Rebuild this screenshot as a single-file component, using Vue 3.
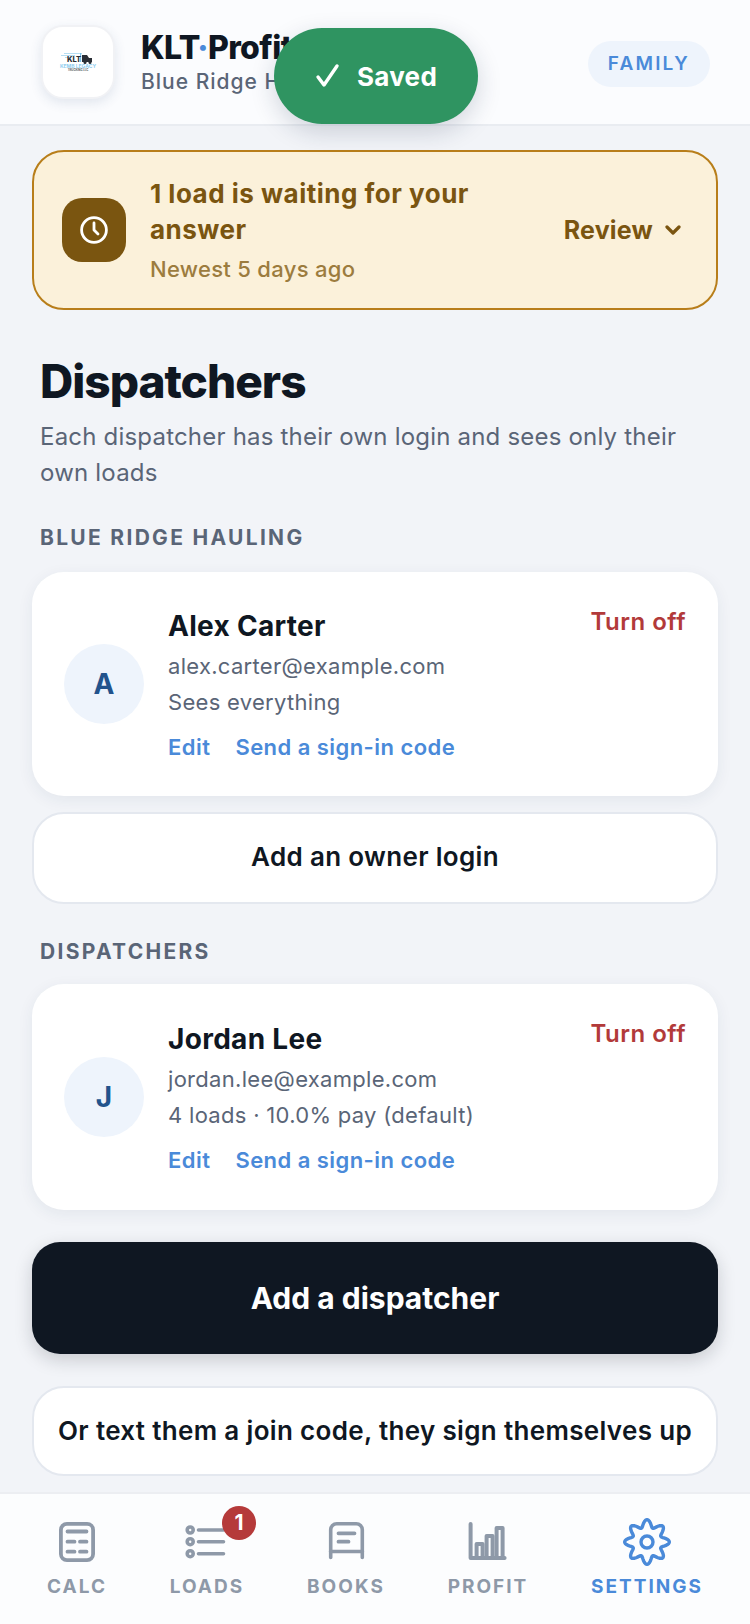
<script setup>
const owners = [
  { id: 1, initial: "A", name: "Alex Carter", email: "alex.carter@example.com", note: "Sees everything" },
];
const dispatchers = [
  { id: 2, initial: "J", name: "Jordan Lee", email: "jordan.lee@example.com", note: "4 loads · 10.0% pay (default)" },
];

// wavy outline for the settings cog, eight rounded teeth
const cogPath = Array.from({ length: 160 }, (_, i) => {
  const a = (i / 160) * Math.PI * 2;
  const r = 18.6 + 3.7 * Math.cos(8 * a);
  const x = 24 + r * Math.sin(a);
  const y = 24 - r * Math.cos(a);
  return `${i ? "L" : "M"}${x.toFixed(2)} ${y.toFixed(2)}`;
}).join("") + "Z";
</script>
<template>
  <div class="page">
    <header class="top">
      <div class="logo">
        <svg width="42" height="20" viewBox="0 0 42 20">
          <path d="M7 1h18v.8H7zM4 3h14v.8H4zM8 5h6v.8H8z" fill="#9fd3ee" />
          <rect x="23" y="1" width="1.200" height="9" fill="#7cc0e6" />
          <text x="10" y="10" class="logo-klt">KLT</text>
          <path d="M25 3h5l2 3h3v4H25z" fill="#2a2e35" />
          <circle cx="28" cy="10.500" r="1.500" fill="#2a2e35" />
          <circle cx="33" cy="10.500" r="1.500" fill="#2a2e35" />
          <text x="21" y="15.500" text-anchor="middle" class="logo-name">KEMB LEGACY</text>
          <text x="21" y="19" text-anchor="middle" class="logo-llc">TRUCKING LLC</text>
        </svg>
      </div>
      <div class="brand">
        <div class="brand-name">KLT<span class="dot">·</span>Profit</div>
        <div class="brand-sub">Blue Ridge Hauling</div>
      </div>
      <span class="plan">FAMILY</span>
    </header>

    <div class="toast">
      <svg width="26" height="26" viewBox="0 0 26 26" fill="none" stroke="#fff" stroke-width="3.400" stroke-linecap="round" stroke-linejoin="round">
        <path d="M3 14l6 8L22 3" />
      </svg>
      <span>Saved</span>
    </div>

    <main class="content">
      <section class="alert">
        <div class="alert-icon">
          <svg width="30" height="30" viewBox="0 0 30 30" fill="none" stroke="#fff" stroke-width="2.800" stroke-linecap="round" stroke-linejoin="round">
            <circle cx="15" cy="15" r="12.400" />
            <path d="M15 8v7l4 4" />
          </svg>
        </div>
        <div class="alert-text">
          <div class="alert-title">1 load is waiting for your answer</div>
          <div class="alert-sub">Newest 5 days ago</div>
        </div>
        <div class="review">
          <span>Review</span>
          <svg width="16" height="12" viewBox="0 0 16 12" fill="none" stroke="#7a5510" stroke-width="3.200" stroke-linecap="round" stroke-linejoin="round">
            <path d="M2 3l6 6 6-6" />
          </svg>
        </div>
      </section>

      <h1>Dispatchers</h1>
      <p class="lead">Each dispatcher has their own login and sees only their own loads</p>

      <h2 class="label first">BLUE RIDGE HAULING</h2>
      <article v-for="p in owners" :key="p.id" class="card">
        <div class="avatar">{{ p.initial }}</div>
        <div class="info">
          <div class="name">{{ p.name }}</div>
          <div class="line">{{ p.email }}</div>
          <div class="line">{{ p.note }}</div>
          <div class="links"><a>Edit</a><a>Send a sign-in code</a></div>
        </div>
        <a class="off">Turn off</a>
      </article>
      <button class="outline owner">Add an owner login</button>

      <h2 class="label second">DISPATCHERS</h2>
      <article v-for="p in dispatchers" :key="p.id" class="card tall">
        <div class="avatar">{{ p.initial }}</div>
        <div class="info">
          <div class="name">{{ p.name }}</div>
          <div class="line">{{ p.email }}</div>
          <div class="line">{{ p.note }}</div>
          <div class="links"><a>Edit</a><a>Send a sign-in code</a></div>
        </div>
        <a class="off">Turn off</a>
      </article>

      <button class="primary">Add a dispatcher</button>
      <button class="outline join">Or text them a join code, they sign themselves up</button>
    </main>

    <nav class="tabs">
      <div class="tab">
        <svg class="ico" width="48" height="48" viewBox="0 0 48 48" fill="none" stroke="currentColor" stroke-width="3.800" stroke-linecap="round">
          <rect x="7.900" y="5.900" width="32.200" height="36.200" rx="6" />
          <path d="M14.500 13.500h19M14.500 23.700h7M27 23.700h6.500M14.500 33.700h7M27 33.700h6.500" />
        </svg>
        <span>CALC</span>
      </div>
      <div class="tab">
        <span class="ico-wrap">
          <svg class="ico" width="48" height="48" viewBox="0 0 48 48" fill="none" stroke="currentColor" stroke-width="3.600" stroke-linecap="round">
            <path d="M15.500 12h25M15.500 23.700h25M15.500 35.700h25" />
            <circle cx="7.200" cy="12" r="3" />
            <circle cx="7.200" cy="23.700" r="3" />
            <circle cx="7.200" cy="35.700" r="3" />
          </svg>
          <span class="badge">1</span>
        </span>
        <span>LOADS</span>
      </div>
      <div class="tab">
        <svg class="ico" width="48" height="48" viewBox="0 0 48 48" fill="none" stroke="currentColor" stroke-width="3.600" stroke-linecap="round" stroke-linejoin="round">
          <path d="M8.700 39.500V11.700a6 6 0 0 1 6-6h19.600a6 6 0 0 1 6 6v27.800" />
          <path d="M8.700 33.500h31.600" />
          <path d="M16.500 15.300h16M16.500 23.700h10" stroke-width="3.800" />
        </svg>
        <span>BOOKS</span>
      </div>
      <div class="tab">
        <svg class="ico" width="48" height="48" viewBox="0 0 48 48" fill="none" stroke="currentColor" stroke-width="4" stroke-linecap="round" stroke-linejoin="round">
          <path d="M6.600 6v34h34" />
          <rect x="12.600" y="26" width="6" height="14" />
          <rect x="22.600" y="18" width="6" height="22" />
          <rect x="32.600" y="10" width="6" height="30" />
        </svg>
        <span>PROFIT</span>
      </div>
      <div class="tab active">
        <svg class="ico" width="48" height="48" viewBox="0 0 48 48" fill="none" stroke="currentColor" stroke-width="3.400" stroke-linejoin="round">
          <path :d="cogPath" />
          <circle cx="24" cy="24" r="6" />
        </svg>
        <span>SETTINGS</span>
      </div>
    </nav>
  </div>
</template>
<style scoped>
* {
  box-sizing: border-box;
  margin: 0;
}

.page {
  position: relative;
  display: flex;
  flex-direction: column;
  width: 750px;
  height: 1624px;
  overflow: hidden;
  background: #f2f4f8;
  font-family: Inter, "Liberation Sans", sans-serif;
  font-optical-sizing: none;
  color: #0f1722;
}

.top {
  display: flex;
  align-items: center;
  height: 126px;
  padding: 0 40px 0 41px;
  background: #fbfcfe;
  border-bottom: 2px solid #e9ecf1;
}

.logo {
  display: flex;
  align-items: center;
  justify-content: center;
  width: 74px;
  height: 74px;
  margin-right: 26px;
  background: #fff;
  border: 2px solid #f1f2f5;
  border-radius: 22px;
  box-shadow: 0 4px 12px rgba(40, 70, 120, 0.12);
}

.logo-klt {
  font-size: 7.500px;
  font-weight: 800;
  fill: #2a2e35;
}

.logo-name {
  font-size: 5px;
  font-weight: 700;
  fill: #8fcdef;
}

.logo-llc {
  font-size: 2.800px;
  font-weight: 700;
  fill: #555b63;
}

.brand {
  flex: 1;
  min-width: 0;
}

.brand-name {
  font-size: 32px;
  font-weight: 800;
  line-height: 40px;
  letter-spacing: -0.6px;
}

.dot {
  color: #4a8ad9;
}

.brand-sub {
  font-size: 21px;
  font-weight: 500;
  line-height: 28px;
  letter-spacing: 1px;
  color: #5a6577;
}

.plan {
  margin-top: 4px;
  padding: 10px 20px;
  font-size: 19px;
  font-weight: 600;
  line-height: 26px;
  letter-spacing: 2.200px;
  color: #4a8ad9;
  background: #eef4fc;
  border-radius: 24px;
}

.toast {
  position: absolute;
  top: 28px;
  left: 274px;
  display: flex;
  align-items: center;
  justify-content: center;
  gap: 16px;
  width: 204px;
  height: 96px;
  font-size: 26px;
  font-weight: 700;
  letter-spacing: 0.3px;
  color: #fff;
  background: #2f9461;
  border-radius: 48px;
  box-shadow: 0 8px 24px rgba(20, 40, 70, 0.18);
}

.content {
  flex: 1;
  min-height: 0;
  padding: 24px 32px 0;
}

.alert {
  display: flex;
  align-items: center;
  height: 160px;
  padding: 0 35px 0 28px;
  background: #fbf1da;
  border: 2px solid #b87e1a;
  border-radius: 32px;
}

.alert-icon {
  display: flex;
  align-items: center;
  justify-content: center;
  flex: none;
  width: 64px;
  height: 64px;
  margin-right: 24px;
  background: #7a5510;
  border-radius: 20px;
}

.alert-text {
  flex: 1;
  min-width: 0;
}

.alert-title {
  width: 340px;
  font-size: 26px;
  font-weight: 700;
  line-height: 36px;
  letter-spacing: 0.5px;
  color: #7a5510;
}

.alert-sub {
  margin-top: 6px;
  font-size: 22px;
  font-weight: 500;
  line-height: 30px;
  letter-spacing: 0.3px;
  color: #9c7c3e;
}

.review {
  display: flex;
  align-items: center;
  gap: 12px;
  font-size: 25px;
  font-weight: 700;
  letter-spacing: 0.2px;
  color: #7a5510;
}

h1 {
  margin-top: 42px;
  padding-left: 8px;
  font-size: 46px;
  font-weight: 800;
  line-height: 58px;
  letter-spacing: -1px;
}

.lead {
  margin-top: 9px;
  padding-left: 8px;
  font-size: 24px;
  line-height: 36px;
  letter-spacing: 0.2px;
  color: #5a6577;
}

.label {
  padding-left: 8px;
  font-size: 21px;
  font-weight: 700;
  line-height: 28px;
  letter-spacing: 2.300px;
  color: #5a6577;
}

.first {
  margin: 33px 0 20px;
}

.second {
  margin: 34px 0 18px;
}

.card {
  display: flex;
  align-items: center;
  height: 224px;
  padding: 0 32px;
  background: #fff;
  border-radius: 32px;
  box-shadow: 0 4px 16px rgba(30, 50, 90, 0.07);
}

.card.tall {
  height: 226px;
}

.avatar {
  display: flex;
  align-items: center;
  justify-content: center;
  flex: none;
  width: 80px;
  height: 80px;
  margin-right: 24px;
  font-size: 28px;
  font-weight: 700;
  color: #22538c;
  background: #eef4fc;
  border-radius: 50%;
}

.info {
  flex: 1;
  min-width: 0;
}

.name {
  font-size: 28px;
  font-weight: 700;
  line-height: 38px;
  letter-spacing: 0.3px;
}

.line {
  margin-top: 6px;
  font-size: 22px;
  line-height: 30px;
  letter-spacing: 0.3px;
  color: #5a6577;
}

.links {
  display: flex;
  gap: 25px;
  margin-top: 15px;
  font-size: 22px;
  font-weight: 600;
  line-height: 30px;
  letter-spacing: 0.45px;
  color: #4a8ad9;
}

.off {
  align-self: flex-start;
  margin-top: 35px;
  font-size: 24px;
  font-weight: 600;
  line-height: 30px;
  letter-spacing: 0.5px;
  color: #b23a3a;
}

button {
  display: block;
  width: 100%;
  font-family: inherit;
  cursor: pointer;
}

.outline {
  font-weight: 600;
  letter-spacing: 0.33px;
  color: #0f1722;
  background: #fff;
  border: 2px solid #e4e8ef;
  border-radius: 32px;
}

.owner {
  height: 92px;
  margin-top: 16px;
  padding: 0 0 3px;
  font-size: 26px;
}

.primary {
  height: 112px;
  margin-top: 32px;
  font-size: 30px;
  font-weight: 700;
  color: #fff;
  background: #0f1722;
  border: none;
  border-radius: 28px;
  box-shadow: 0 6px 18px rgba(15, 23, 34, 0.18);
}

.join {
  height: 90px;
  margin-top: 32px;
  padding: 0 0 2px;
  font-size: 26px;
}

.tabs {
  display: flex;
  flex: none;
  justify-content: space-between;
  height: 132px;
  padding: 24px 47px 0;
  background: #fcfdfe;
  border-top: 2px solid #eceef2;
}

.tab {
  display: flex;
  flex-direction: column;
  align-items: center;
  font-size: 19px;
  font-weight: 700;
  letter-spacing: 2px;
  line-height: 26px;
  color: #8e99a8;
}

.tab.active {
  color: #4a8ad9;
}

.ico {
  display: block;
  margin-bottom: 8px;
}

.ico-wrap {
  position: relative;
  display: block;
}

.badge {
  position: absolute;
  top: -12px;
  right: -25px;
  display: flex;
  align-items: center;
  justify-content: center;
  width: 34px;
  height: 34px;
  font-size: 21px;
  font-weight: 700;
  letter-spacing: 0;
  color: #fff;
  background: #b53a3a;
  border-radius: 50%;
}
</style>
